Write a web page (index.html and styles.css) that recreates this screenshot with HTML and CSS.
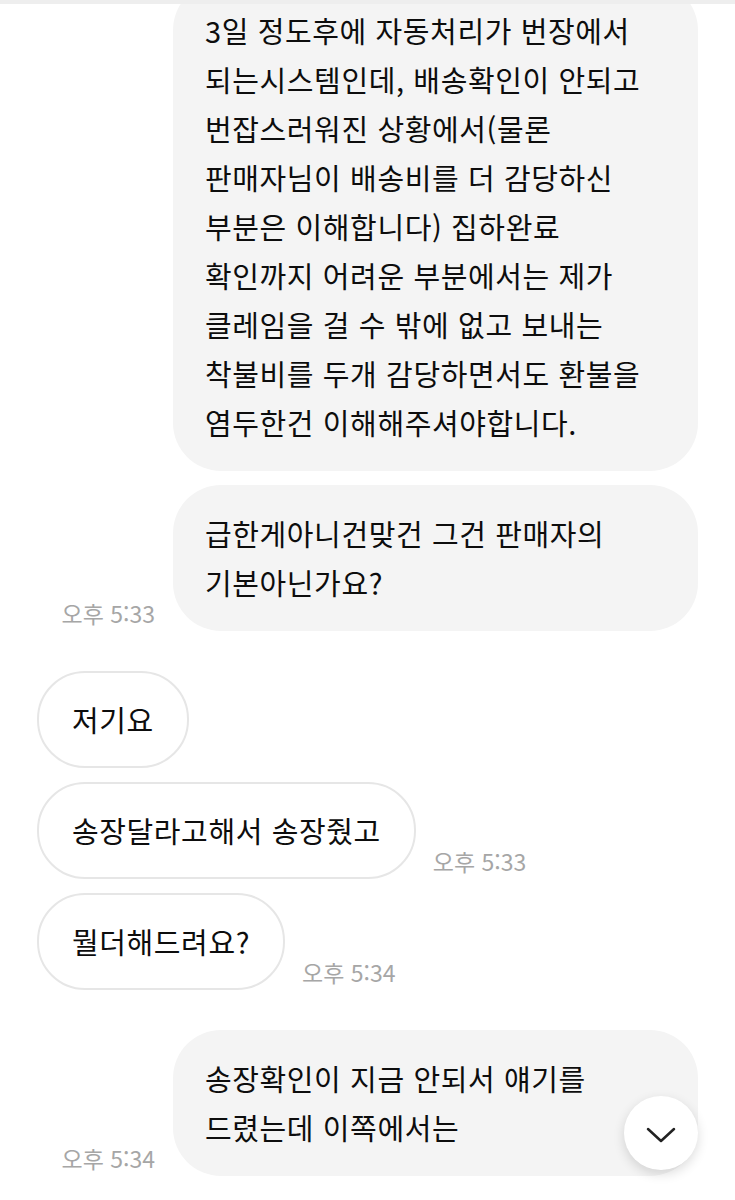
FILE: index.html
```html
<!DOCTYPE html>
<html lang="ko">
<head>
    <meta charset="UTF-8">
    <meta name="viewport" content="width=device-width, initial-scale=1.0">
    <title>채팅</title>
    <link rel="stylesheet" href="styles.css">
</head>
<body>
    <div class="top-bar"></div>

    <main class="chat">
        <!-- 내가 보낸 메시지 -->
        <div class="group">
            <div class="row out">
                <p class="bubble">3일 정도후에 자동처리가 번장에서 되는시스템인데, 배송확인이 안되고 번잡스러워진 상황에서(물론 판매자님이 배송비를 더 감당하신 부분은 이해합니다) 집하완료 확인까지 어려운 부분에서는 제가 클레임을 걸 수 밖에 없고 보내는 착불비를 두개 감당하면서도 환불을 염두한건 이해해주셔야합니다.</p>
            </div>
            <div class="row out">
                <span class="time">오후 5:33</span>
                <p class="bubble">급한게아니건맞건 그건 판매자의 기본아닌가요?</p>
            </div>
        </div>

        <!-- 상대방 메시지 -->
        <div class="group">
            <div class="row in">
                <p class="bubble">저기요</p>
            </div>
            <div class="row in">
                <p class="bubble">송장달라고해서 송장줬고</p>
                <span class="time">오후 5:33</span>
            </div>
            <div class="row in">
                <p class="bubble">뭘더해드려요?</p>
                <span class="time">오후 5:34</span>
            </div>
        </div>

        <div class="group">
            <div class="row out">
                <span class="time">오후 5:34</span>
                <p class="bubble">송장확인이 지금 안되서 얘기를 드렸는데 이쪽에서는</p>
            </div>
        </div>
    </main>

    <button class="scroll-down" aria-label="맨 아래로">
        <svg width="30" height="16" viewBox="0 0 30 16">
            <path d="M2 2 L15 14 L28 2" fill="none" stroke="#222" stroke-width="2.5" stroke-linecap="round" stroke-linejoin="round"/>
        </svg>
    </button>
</body>
</html>
```

FILE: styles.css
```css
body {
    margin: 0;
    background: #fff;
    color: #0d0d0d;
    font-family: "Noto Sans CJK KR", "Noto Sans", sans-serif;
}

.top-bar {
    height: 4px;
    background: #eeeeee;
}

.chat {
    box-sizing: border-box;
    height: 1196px;
    padding: 0 37px 24px;
    display: flex;
    flex-direction: column;
    justify-content: flex-end;
    gap: 40px;
    overflow: hidden;
}

.group {
    display: flex;
    flex-direction: column;
    gap: 14px;
    flex-shrink: 0;
}

.row {
    display: flex;
    align-items: flex-end;
}
.row.out {
    justify-content: flex-end;
    gap: 18px;
}
.row.in {
    gap: 17px;
}

.bubble {
    margin: 0;
    font-size: 29px;
    letter-spacing: 0.6px;
    line-height: 49px;
    word-break: keep-all;
    border-radius: 48px;
}
.out .bubble {
    max-width: 452px;
    padding: 24px 41px 24px 32px;
    background: #f4f4f4;
}
.in .bubble {
    padding: 22px 33px;
    background: #fff;
    border: 2px solid #e6e6e6;
}

.time {
    font-size: 23px;
    line-height: 26px;
    color: #a6a6a6;
    white-space: nowrap;
    margin-bottom: 5px;
}

.scroll-down {
    position: fixed;
    right: 37px;
    bottom: 30px;
    width: 74px;
    height: 74px;
    padding: 0;
    border: none;
    border-radius: 50%;
    background: #fff;
    box-shadow: 0 4px 12px rgba(0, 0, 0, 0.14);
    display: flex;
    align-items: center;
    justify-content: center;
}
.scroll-down svg {
    margin-top: 4px;
}
```
